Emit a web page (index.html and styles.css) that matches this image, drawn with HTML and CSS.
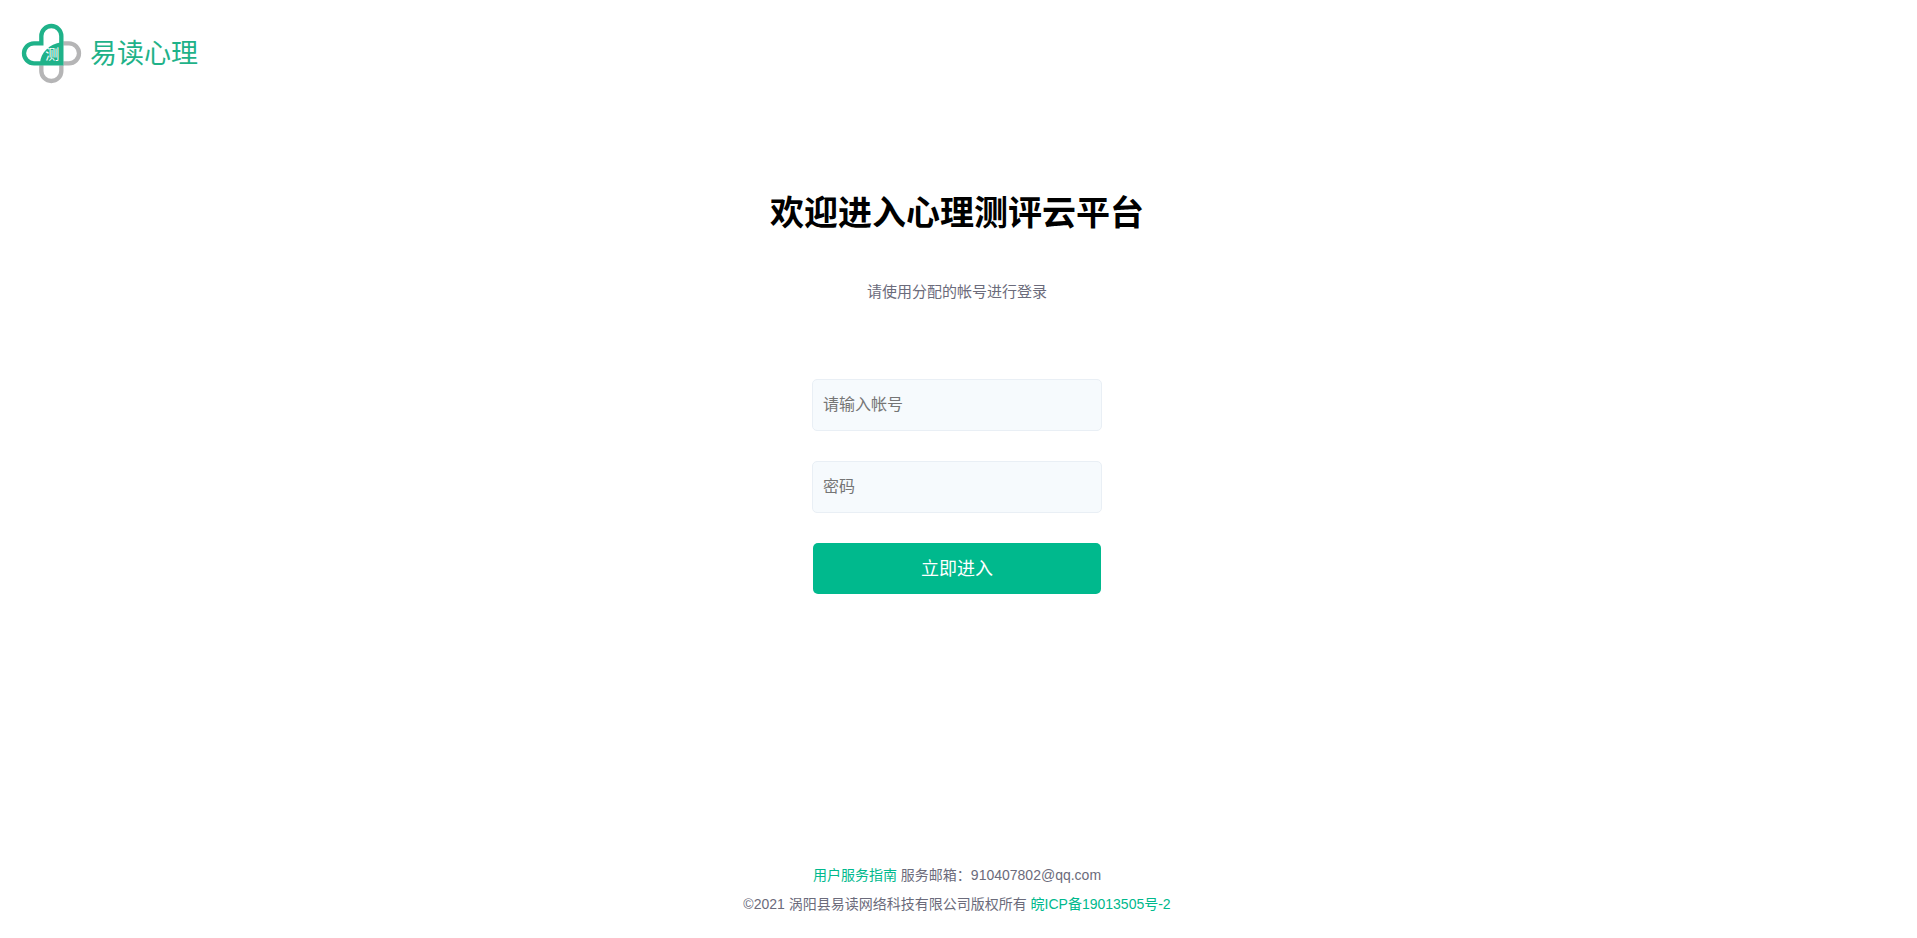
FILE: index.html
```
<!DOCTYPE html>
<html lang="zh-CN">
<head>
    <meta charset="UTF-8">
    <title>心理测评云平台</title>
    <link rel="stylesheet" href="styles.css">
</head>
<body>
    <header class="header">
        <a class="logo" href="#">
            <svg class="logo-icon" viewBox="30 37 189 189" fill="none" stroke-width="13" aria-hidden="true">
                <!-- 灰色部分 -->
                <path stroke="#b5b5b6" d="M160 101H177A30 30 0 0 1 177 161H160M94 167V184A30 30 0 0 0 154 184V167"/>
                <!-- 绿色心形 -->
                <path fill="#1fb289" d="M90 161C92 128 118 104 154 98V161Z"/>
                <path stroke="#1fb289" d="M154 161V79A30 30 0 0 0 94 79V101H72A30 30 0 0 0 72 161Z"/>
                <text class="logo-mark" x="127" y="149" text-anchor="middle">测</text>
            </svg>
            <span class="logo-text">易读心理</span>
        </a>
    </header>

    <main class="login">
        <h1>欢迎进入心理测评云平台</h1>
        <p class="tip">请使用分配的帐号进行登录</p>
        <form class="login-form">
            <input type="text" name="username" placeholder="请输入帐号" aria-label="请输入帐号">
            <input type="password" name="password" placeholder="密码" aria-label="密码">
            <button type="button">立即进入</button>
        </form>
    </main>

    <footer class="footer">
        <p><a href="#">用户服务指南</a> 服务邮箱：910407802@qq.com</p>
        <p>©2021 涡阳县易读网络科技有限公司版权所有 <a href="#">皖ICP备19013505号-2</a></p>
    </footer>
</body>
</html>
```
FILE: styles.css
```
* {
    box-sizing: border-box;
}

body {
    display: flex;
    flex-direction: column;
    min-height: 100vh;
    margin: 0;
    padding-right: 3px;
    background-color: #fff;
    color: #6b6b7b;
    font-family: "Liberation Sans", "Noto Sans CJK SC", sans-serif;
    font-size: 14px;
}

h1, p {
    margin: 0;
}

a {
    color: #00b98d;
    text-decoration: none;
}

.header {
    padding: 22px 20px;
}

.logo {
    display: inline-flex;
    align-items: center;
    gap: 7px;
    color: #1fb289;
}

.logo-icon {
    width: 63px;
    height: 63px;
}

.logo-mark {
    fill: #fff;
    font-size: 42px;
}

.logo-text {
    font-size: 27px;
    line-height: 32px;
}

/* 登录区域 */
.login {
    display: flex;
    flex: 1;
    flex-direction: column;
    align-items: center;
    padding-top: 78px;
    text-align: center;
}

.login h1 {
    color: #000;
    font-size: 34px;
    line-height: 50px;
}

.tip {
    margin-top: 44px;
    font-size: 15px;
    line-height: 20px;
}

.login-form {
    display: flex;
    flex-direction: column;
    align-items: center;
    gap: 30px;
    margin-top: 77px;
}

.login-form input {
    width: 290px;
    height: 52px;
    padding: 0 10px;
    border: 1px solid #e9eff5;
    border-radius: 5px;
    background-color: #f6fafd;
    font-family: inherit;
    font-size: 16px;
}

.login-form input::placeholder {
    color: #757575;
}

.login-form button {
    width: 288px;
    height: 51px;
    padding: 0 0 4px;
    border: none;
    border-radius: 5px;
    background-color: #00b98d;
    color: #fff;
    font-family: inherit;
    font-size: 18px;
    cursor: pointer;
}

.footer {
    padding-bottom: 19px;
    line-height: 29px;
    text-align: center;
}
```
